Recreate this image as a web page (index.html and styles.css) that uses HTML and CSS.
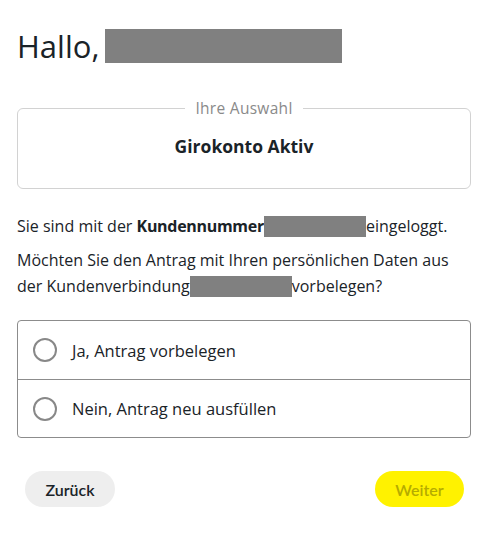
FILE: index.html
```html
<!DOCTYPE html>
<html lang="de">
<head>
<meta charset="utf-8">
<link rel="stylesheet" href="styles.css">
</head>
<body>
<main class="page">
  <h1 class="greeting">Hallo, <span class="mask mask-name"></span></h1>

  <fieldset class="selection">
    <legend class="selection-legend">Ihre Auswahl</legend>
    <div class="selection-product">Girokonto Aktiv</div>
  </fieldset>

  <p class="text text-login">Sie sind mit der <strong>Kundennummer</strong><span class="mask mask-inline"></span>eingeloggt.</p>
  <p class="text text-question">Möchten Sie den Antrag mit Ihren persönlichen Daten aus der Kundenverbindung<span class="mask mask-inline"></span>vorbelegen?</p>

  <div class="options">
    <label class="option">
      <span class="radio"></span>
      <span class="option-label">Ja, Antrag vorbelegen</span>
    </label>
    <label class="option">
      <span class="radio"></span>
      <span class="option-label">Nein, Antrag neu ausfüllen</span>
    </label>
  </div>

  <div class="actions">
    <button class="btn btn-back">Zurück</button>
    <button class="btn btn-next">Weiter</button>
  </div>
</main>
</body>
</html>
```

FILE: styles.css
```css
* { box-sizing: border-box; }

html, body {
  margin: 0;
  padding: 0;
  background: #fff;
}

body {
  font-family: "Open Sans", "Liberation Sans", sans-serif;
  color: #1a2328;
}

.page {
  padding: 0 16px 0 17px;
}

.greeting {
  margin: 28px 0 0;
  font-size: 31px;
  font-weight: 400;
  line-height: 36px;
  display: flex;
  align-items: center;
  gap: 6px;
}

.mask {
  display: inline-block;
  background: #808080;
}

.mask-name {
  width: 237px;
  height: 34px;
}

.selection {
  margin: 35px 0 0;
  padding: 0;
  border: 1px solid #d2d2d2;
  border-radius: 6px;
  height: 90px;
}

.selection-legend {
  margin: 0 auto;
  padding: 0 10px;
  font-size: 15.5px;
  letter-spacing: 0.3px;
  line-height: 18px;
  color: #8a8a8a;
}

.selection-product {
  text-align: center;
  font-weight: 700;
  font-size: 17.5px;
  line-height: 20px;
  margin-top: 19px;
}

.text {
  margin: 0;
  font-size: 16px;
  line-height: 26px;
}

.text-login {
  margin-top: 24px;
}

.text-question {
  margin-top: 8px;
  max-width: 450px;
}

.text strong {
  font-weight: 700;
  letter-spacing: -0.3px;
}

.mask-inline {
  width: 102px;
  height: 21px;
  vertical-align: -5px;
}

.options {
  margin-top: 21px;
  border: 1px solid #8c8c8c;
  border-radius: 4px;
}

.option {
  display: flex;
  align-items: center;
  gap: 15px;
  height: 58px;
  padding-left: 15px;
  font-size: 16.5px;
}

.option + .option {
  border-top: 1px solid #8c8c8c;
}

.radio {
  width: 24px;
  height: 24px;
  border: 2px solid #888;
  border-radius: 50%;
  flex: none;
}

.actions {
  display: flex;
  justify-content: space-between;
  margin-top: 33px;
  padding: 0 7px 0 8px;
}

.btn {
  font-family: "Lato", "Liberation Sans", sans-serif;
  height: 36px;
  border: 0;
  border-radius: 18px;
  font-size: 16px;
  font-weight: 600;
  padding: 0;
}

.btn-back {
  width: 90px;
  background: #eeeeee;
  color: #1a2328;
}

.btn-next {
  width: 89px;
  background: #fff200;
  color: #b5ab00;
}
```
